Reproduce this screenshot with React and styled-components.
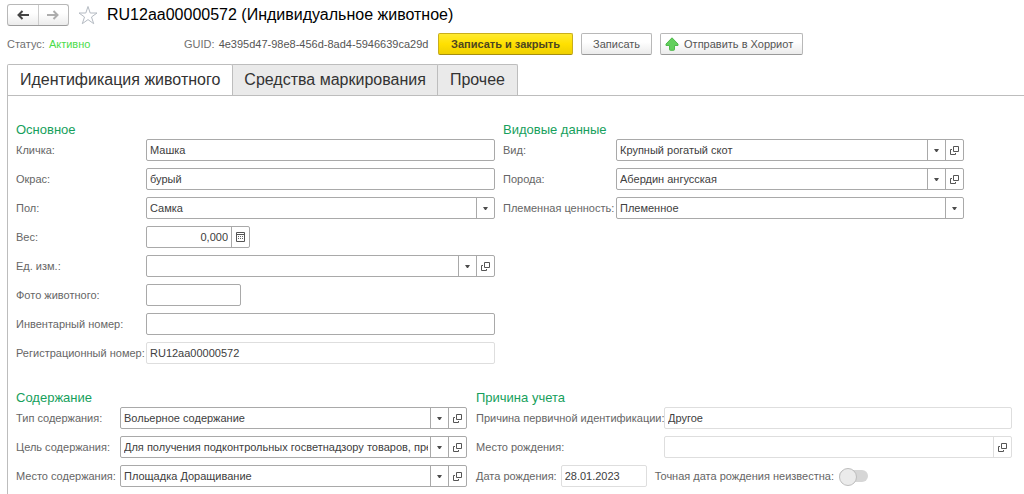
import { useState } from "react";
import styled, { createGlobalStyle, css } from "styled-components";

const GlobalStyle = createGlobalStyle`
  * {
    box-sizing: border-box;
  }
  body {
    margin: 0;
    background: #fff;
    color: #404040;
    font-family: "Liberation Sans", Arial, sans-serif;
    font-size: 11px;
    line-height: 16px;
  }
  button, input, select {
    font: inherit;
    color: inherit;
  }
`;

const Page = styled.div`
  display: flex;
  flex-direction: column;
  min-height: 100vh;
  padding: 4px 0 0 7px;
`;

const Header = styled.header`
  display: flex;
  align-items: center;
  height: 22px;
`;

const History = styled.div`
  display: flex;
  width: 62px;
  height: 22px;
  border: 1px solid #b8b8b8;
  border-bottom-color: #9c9c9c;
  border-radius: 3px;
  background: linear-gradient(#fff 40%, #ececec);
`;

const HistoryButton = styled.button`
  display: flex;
  flex: 1;
  align-items: center;
  justify-content: center;
  padding: 0;
  border: 0;
  background: none;
  color: #444;

  & + & {
    border-left: 1px solid #ccc;
  }
  &:disabled {
    color: #adadad;
  }
`;

const StarButton = styled.button`
  display: flex;
  margin: 0 8px;
  padding: 0;
  border: 0;
  background: none;
`;

const Title = styled.h1`
  margin: 0;
  color: #000;
  font-size: 16px;
  font-weight: 400;
  line-height: 22px;
`;

const CommandBar = styled.div`
  display: flex;
  align-items: center;
  gap: 8px;
  margin-top: 7px;
`;

const Info = styled.div`
  min-width: ${(props) => props.$width}px;
  color: #707070;
  white-space: nowrap;
`;

const InfoValue = styled.span`
  margin-left: 1px;
  color: ${(props) => (props.$active ? "#4bdc4b" : "#555")};
`;

const Button = styled.button`
  display: flex;
  align-items: center;
  justify-content: center;
  gap: 5px;
  height: 22px;
  padding: 0 11px;
  border: 1px solid #b8b8b8;
  border-bottom-color: #999;
  border-radius: 2px;
  background: linear-gradient(#fff 40%, #ebebeb);
  color: #555;
  white-space: nowrap;

  ${(props) => props.$primary && css`
    padding: 0 12px;
    border-color: #c9ae1c;
    border-bottom-color: #a58e10;
    background: linear-gradient(#ffea30, #ffe000 50%, #efd000);
    color: #4d4620;
    font-weight: 700;
  `}
  ${(props) => props.$icon && css`
    padding: 0 9px 0 4px;
  `}
`;

const Tabs = styled.div`
  display: flex;
  margin-top: 9px;
  border-bottom: 1px solid #bdbdbd;
`;

const Tab = styled.button`
  height: 31px;
  padding: 0 12px;
  border: 1px solid #bdbdbd;
  border-bottom: 0;
  border-radius: 2px 2px 0 0;
  background: #eaeaea;
  color: #333;
  font-size: 16px;
  white-space: nowrap;

  & + & {
    margin-left: -2px;
  }
  &[aria-selected="true"] {
    z-index: 1;
    margin-bottom: -1px;
    background: #fff;
  }
`;

const Panel = styled.main`
  flex: 1;
  padding: 25px 12px 6px 8px;
  border-left: 1px solid #bdbdbd;
`;

const TopColumns = styled.div`
  display: grid;
  grid-template-columns: minmax(0, 479fr) minmax(0, 461fr);
  gap: 8px;
  padding-right: 48px;
`;

const BottomColumns = styled.div`
  display: grid;
  grid-template-columns: minmax(0, 451fr) minmax(0, 536fr);
  gap: 9px;
  margin-top: 25px;
`;

const Section = styled.section`
  display: flex;
  flex-direction: column;
  gap: 7px;
`;

const SectionTitle = styled.h2`
  margin: 0 0 -7px;
  color: #16a05c;
  font-size: 13px;
  font-weight: 400;
  line-height: 18px;
`;

const Row = styled.div`
  display: flex;
  align-items: center;
  height: 22px;
`;

const Label = styled.label`
  flex: none;
  width: ${(props) => (props.$width ? `${props.$width}px` : "auto")};
  color: #666;
  white-space: nowrap;
`;

const Box = styled.div`
  position: relative;
  display: flex;
  flex: ${(props) => (props.$width ? "none" : "1")};
  width: ${(props) => (props.$width ? `${props.$width}px` : "auto")};
  min-width: 0;
  height: 22px;
  border: 1px solid ${(props) => (props.$readOnly ? "#dedede" : "#a9a9a9")};
  border-radius: 2px;
  background: #fff;
`;

const Input = styled.input`
  flex: 1;
  width: 100%;
  min-width: 0;
  padding: 0 3px;
  border: 0;
  outline: 0;
  background: none;
  text-align: ${(props) => (props.$number ? "right" : "left")};
`;

const Select = styled.select`
  flex: 1;
  min-width: 0;
  padding: 0 20px 0 3px;
  border: 0;
  outline: 0;
  appearance: none;
  background: none;
`;

const SelectBox = styled.div`
  position: relative;
  display: flex;
  flex: 1;
  min-width: 0;
`;

const Arrow = styled.span`
  position: absolute;
  top: 0;
  right: 0;
  bottom: 0;
  display: flex;
  align-items: center;
  justify-content: center;
  width: 18px;
  border-left: 1px solid #a9a9a9;
  pointer-events: none;
`;

const FieldButton = styled.button`
  display: flex;
  flex: none;
  align-items: center;
  justify-content: center;
  width: 18px;
  padding: 0;
  border: 0;
  border-left: 1px solid ${(props) => (props.$readOnly ? "#dedede" : "#a9a9a9")};
  background: none;
`;

const DateGroup = styled.div`
  display: flex;
  align-items: center;
  gap: 4px;
  margin-right: 8px;
`;

const Switch = styled.input`
  position: relative;
  width: 29px;
  height: 12px;
  margin: 0 0 0 5px;
  border-radius: 6px;
  appearance: none;
  background: #d6d6d6;

  &::before {
    content: "";
    position: absolute;
    top: -2px;
    left: 0;
    width: 16px;
    height: 16px;
    border: 1px solid #bdbdbd;
    border-radius: 50%;
    background: #ebebeb;
  }
  &:checked::before {
    left: 13px;
  }
`;

const ArrowIcon = ({ right }) => (
  <svg width="12" height="10" viewBox="0 0 12 10">
    <path
      d={right ? "M0 5H10M6.5 1L10.5 5L6.5 9" : "M12 5H2M5.5 1L1.5 5L5.5 9"}
      fill="none"
      stroke="currentColor"
      strokeWidth="2"
    />
  </svg>
);

const StarIcon = () => (
  <svg width="22" height="20" viewBox="0 0 22 20">
    <path
      d="M11 1.5L13.2 8H20L14.5 12L16.7 18.7L11 14.6L5.3 18.7L7.5 12L2 8H8.8Z"
      fill="#fff"
      stroke="#b4bac2"
    />
  </svg>
);

const SendIcon = () => (
  <svg width="14" height="14" viewBox="0 0 14 14">
    <path
      d="M7 0.8L13 7V8.5H9.5V12.5Q9.5 13.3 8.7 13.3H5.3Q4.5 13.3 4.5 12.5V8.5H1V7Z"
      fill="#62cf5c"
      stroke="#4fb84b"
      strokeLinejoin="round"
    />
  </svg>
);

const CaretIcon = () => (
  <svg width="5" height="3" viewBox="0 0 5 3">
    <path d="M0 0H5L3 3H2Z" fill="#4d4d4d" />
  </svg>
);

const OpenIcon = () => (
  <svg width="9" height="9" viewBox="0 0 9 9">
    <path d="M3.5 0.5H8.5V5.5H3.5ZM2 3.5H0.5V8.5H5.5V7" fill="none" stroke="#555" />
  </svg>
);

const CalcIcon = () => (
  <svg width="9" height="10" viewBox="0 0 9 10">
    <path d="M0.5 0.5H8.5V9.5H0.5ZM0 2.5H9" fill="none" stroke="#555" />
    <path d="M2 4.5H7M2 6.5H7" stroke="#666" strokeDasharray="1 1" />
  </svg>
);

const TextField = ({ id, label, labelWidth, value = "", width, readOnly, number, children }) => (
  <Row>
    <Label htmlFor={id} $width={labelWidth}>{label}</Label>
    <Box $width={width} $readOnly={readOnly}>
      <Input id={id} defaultValue={value} readOnly={readOnly} $number={number} />
      {children}
    </Box>
  </Row>
);

const SelectField = ({ id, label, labelWidth, value = "", open }) => (
  <Row>
    <Label htmlFor={id} $width={labelWidth}>{label}</Label>
    <Box>
      <SelectBox>
        <Select id={id} defaultValue={value}>
          <option>{value}</option>
        </Select>
        <Arrow><CaretIcon /></Arrow>
      </SelectBox>
      {open && <FieldButton type="button" aria-label="Открыть"><OpenIcon /></FieldButton>}
    </Box>
  </Row>
);

const tabs = ["Идентификация животного", "Средства маркирования", "Прочее"];

const App = () => {
  const [tab, setTab] = useState(0);

  return (
    <Page>
      <GlobalStyle />
      <Header>
        <History>
          <HistoryButton type="button" aria-label="Назад"><ArrowIcon /></HistoryButton>
          <HistoryButton type="button" aria-label="Вперед" disabled><ArrowIcon right /></HistoryButton>
        </History>
        <StarButton type="button" aria-label="В избранное"><StarIcon /></StarButton>
        <Title>RU12aa00000572 (Индивидуальное животное)</Title>
      </Header>

      <CommandBar>
        <Info $width={169}>Статус: <InfoValue $active>Активно</InfoValue></Info>
        <Info $width={246}>GUID: <InfoValue>4e395d47-98e8-456d-8ad4-5946639ca29d</InfoValue></Info>
        <Button type="button" $primary>Записать и закрыть</Button>
        <Button type="button">Записать</Button>
        <Button type="button" $icon><SendIcon /> Отправить в Хорриот</Button>
      </CommandBar>

      <Tabs role="tablist">
        {tabs.map((name, i) => (
          <Tab key={name} type="button" role="tab" aria-selected={tab === i} onClick={() => setTab(i)}>
            {name}
          </Tab>
        ))}
      </Tabs>

      <Panel>
        <TopColumns>
          <Section>
            <SectionTitle>Основное</SectionTitle>
            <TextField id="name" label="Кличка:" labelWidth={130} value="Машка" />
            <TextField id="color" label="Окрас:" labelWidth={130} value="бурый" />
            <SelectField id="sex" label="Пол:" labelWidth={130} value="Самка" />
            <TextField id="weight" label="Вес:" labelWidth={130} value="0,000" width={104} number>
              <FieldButton type="button" aria-label="Калькулятор"><CalcIcon /></FieldButton>
            </TextField>
            <SelectField id="unit" label="Ед. изм.:" labelWidth={130} open />
            <TextField id="photo" label="Фото животного:" labelWidth={130} width={95} />
            <TextField id="inventory" label="Инвентарный номер:" labelWidth={130} />
            <TextField id="registry" label="Регистрационный номер:" labelWidth={130} value="RU12aa00000572" readOnly />
          </Section>
          <Section>
            <SectionTitle>Видовые данные</SectionTitle>
            <SelectField id="kind" label="Вид:" labelWidth={113} value="Крупный рогатый скот" open />
            <SelectField id="breed" label="Порода:" labelWidth={113} value="Абердин ангусская" open />
            <SelectField id="pedigree" label="Племенная ценность:" labelWidth={113} value="Племенное" />
          </Section>
        </TopColumns>

        <BottomColumns>
          <Section>
            <SectionTitle>Содержание</SectionTitle>
            <SelectField id="keeping" label="Тип содержания:" labelWidth={104} value="Вольерное содержание" open />
            <SelectField
              id="purpose"
              label="Цель содержания:"
              labelWidth={104}
              value="Для получения подконтрольных госветнадзору товаров, предназначенных"
              open
            />
            <SelectField id="place" label="Место содержания:" labelWidth={104} value="Площадка Доращивание" open />
          </Section>
          <Section>
            <SectionTitle>Причина учета</SectionTitle>
            <TextField id="reason" label="Причина первичной идентификации:" labelWidth={188} value="Другое" readOnly />
            <TextField id="birthplace" label="Место рождения:" labelWidth={188} readOnly>
              <FieldButton type="button" aria-label="Открыть" $readOnly><OpenIcon /></FieldButton>
            </TextField>
            <Row>
              <DateGroup>
                <Label htmlFor="birthday">Дата рождения:</Label>
                <Box $width={86} $readOnly>
                  <Input id="birthday" defaultValue="28.01.2023" readOnly />
                </Box>
              </DateGroup>
              <Label htmlFor="unknown">Точная дата рождения неизвестна:</Label>
              <Switch id="unknown" type="checkbox" role="switch" />
            </Row>
          </Section>
        </BottomColumns>
      </Panel>
    </Page>
  );
};

export default App;
